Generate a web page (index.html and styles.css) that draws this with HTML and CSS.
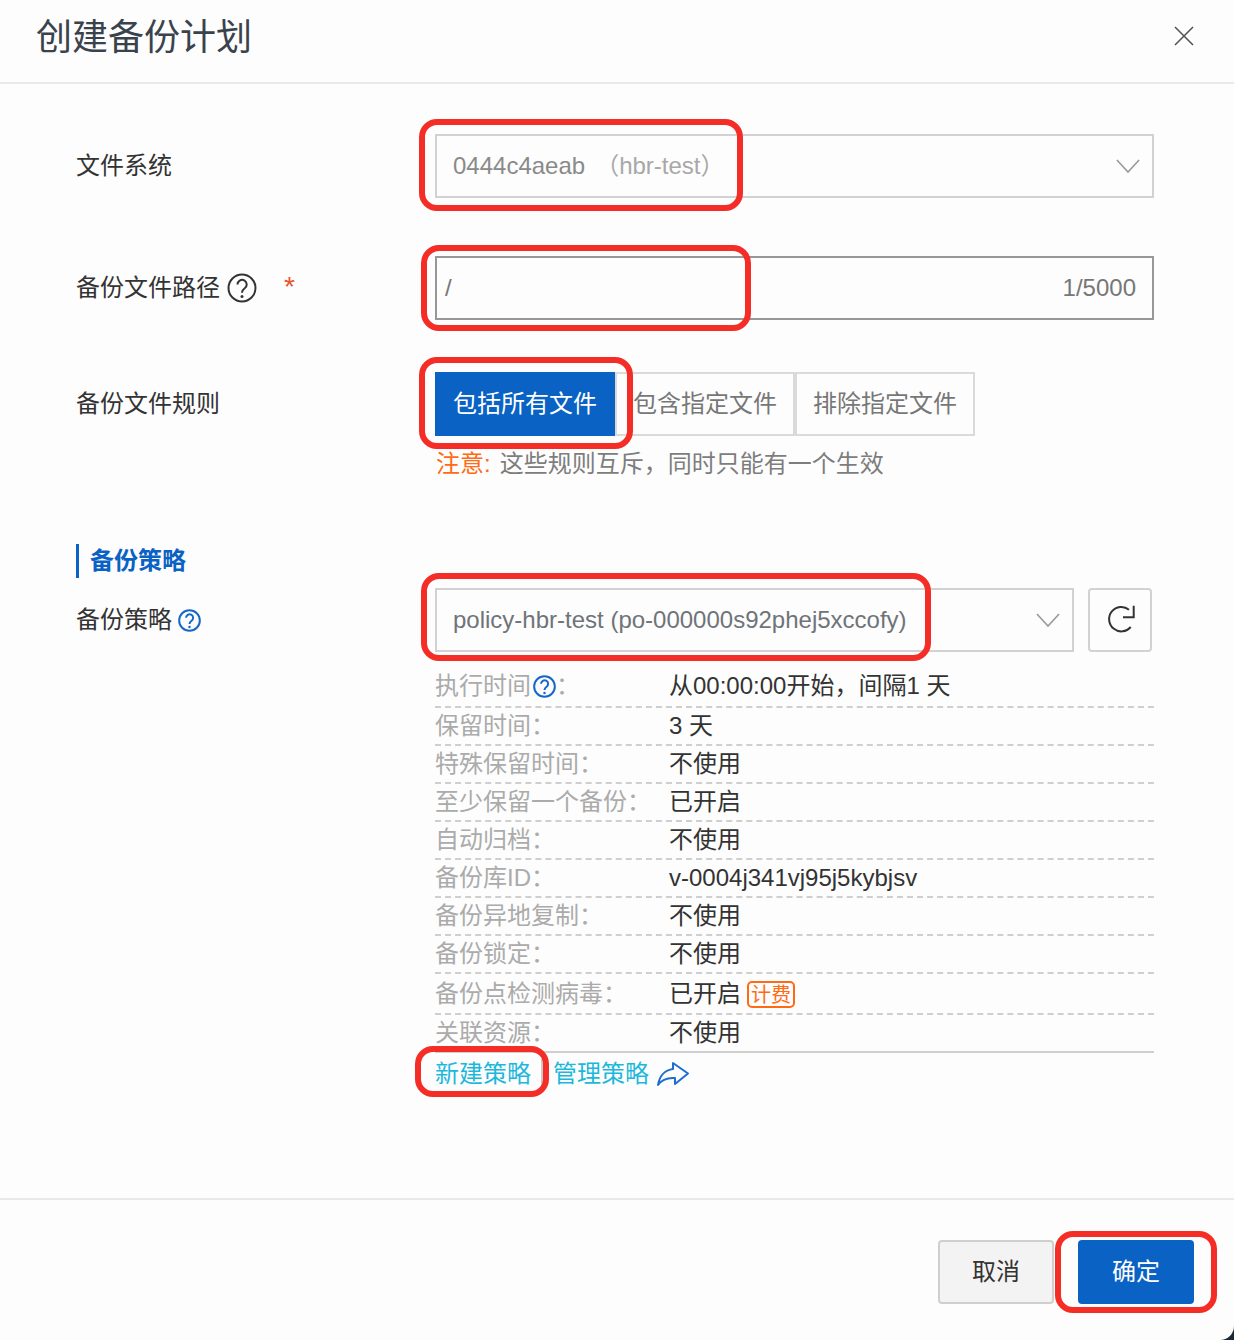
FILE: index.html
```html
<!DOCTYPE html>
<html lang="zh-CN">
<head>
<meta charset="utf-8">
<title>创建备份计划</title>
<link rel="stylesheet" href="styles.css">
</head>
<body>
<div class="modal">
  <header class="head">
    <h1 class="title">创建备份计划</h1>
    <svg class="close" viewBox="0 0 20 20"><path d="M1 1 19 19M19 1 1 19"/></svg>
  </header>

  <main class="content">
    <div class="row row-system">
      <label class="label">文件系统</label>
      <div class="field select">
        <span class="value">0444c4aeab<span class="paren">（hbr-test）</span></span>
        <svg class="chev" viewBox="0 0 26 16"><path d="M1 1 13 14 25 1"/></svg>
      </div>
    </div>

    <div class="row row-path">
      <label class="label">备份文件路径
        <svg class="help help-dark" viewBox="0 0 30 30"><circle cx="15" cy="15" r="13.5"/><path d="M10.5 11.5a4.6 4.6 0 1 1 7.2 3.8c-1.8 1.3-2.7 2.2-2.7 4.4"/><circle class="dot" cx="15" cy="23.5" r="1.5"/></svg>
        <span class="req">*</span>
      </label>
      <div class="field input">
        <span class="slash">/</span>
        <span class="count">1/5000</span>
      </div>
    </div>

    <div class="row row-rule">
      <label class="label">备份文件规则</label>
      <div class="group">
        <button class="seg seg-on">包括所有文件</button>
        <button class="seg">包含指定文件</button>
        <button class="seg">排除指定文件</button>
      </div>
    </div>
    <p class="note"><span class="note-key">注意:</span>这些规则互斥，同时只能有一个生效</p>

    <h2 class="section">备份策略</h2>

    <div class="row row-policy">
      <label class="label">备份策略
        <svg class="help help-blue" viewBox="0 0 30 30"><circle cx="15" cy="15" r="13.5"/><path d="M10.5 11.5a4.6 4.6 0 1 1 7.2 3.8c-1.8 1.3-2.7 2.2-2.7 4.4"/><circle class="dot" cx="15" cy="23.5" r="1.6"/></svg>
      </label>
      <div class="policy-col">
        <div class="policy-select">
          <div class="field select">
            <span class="value value-dark">policy-hbr-test (po-000000s92phej5xccofy)</span>
            <svg class="chev" viewBox="0 0 26 16"><path d="M1 1 13 14 25 1"/></svg>
          </div>
          <button class="refresh" aria-label="刷新">
            <svg viewBox="0 0 30 30"><path d="M25.7 22A12.2 12.2 0 1 1 24 4.7"/><path d="M28.7.7V12.3H18"/></svg>
          </button>
        </div>

        <dl class="info">
          <div class="info-row info-first"><dt>执行时间<svg class="help help-blue help-inline" viewBox="0 0 30 30"><circle cx="15" cy="15" r="13.5"/><path d="M10.5 11.5a4.6 4.6 0 1 1 7.2 3.8c-1.8 1.3-2.7 2.2-2.7 4.4"/><circle class="dot" cx="15" cy="23.5" r="1.6"/></svg>：</dt><dd>从00:00:00开始，间隔1 天</dd></div>
          <div class="info-row"><dt>保留时间：</dt><dd>3 天</dd></div>
          <div class="info-row"><dt>特殊保留时间：</dt><dd>不使用</dd></div>
          <div class="info-row"><dt>至少保留一个备份：</dt><dd>已开启</dd></div>
          <div class="info-row"><dt>自动归档：</dt><dd>不使用</dd></div>
          <div class="info-row"><dt>备份库ID：</dt><dd>v-0004j341vj95j5kybjsv</dd></div>
          <div class="info-row"><dt>备份异地复制：</dt><dd>不使用</dd></div>
          <div class="info-row"><dt>备份锁定：</dt><dd>不使用</dd></div>
          <div class="info-row info-tagged"><dt>备份点检测病毒：</dt><dd>已开启<span class="tag">计费</span></dd></div>
          <div class="info-row info-last"><dt>关联资源：</dt><dd>不使用</dd></div>
        </dl>

        <div class="links">
          <a class="link link-new">新建策略</a>
          <a class="link">管理策略</a>
          <svg class="share" viewBox="0 0 34 26"><path d="M32 12.5 17 2v6C9 9 3.500 15 2 24c4-6 10-7.500 17-7v6z"/></svg>
        </div>
      </div>
    </div>
  </main>

  <footer class="foot">
    <button class="btn btn-cancel">取消</button>
    <button class="btn btn-ok">确定</button>
  </footer>

  <i class="mark mark-1"></i>
  <i class="mark mark-2"></i>
  <i class="mark mark-3"></i>
  <i class="mark mark-4"></i>
  <i class="mark mark-5"></i>
  <i class="mark mark-6"></i>
</div>
</body>
</html>
```

FILE: styles.css
```css
* { box-sizing: border-box; }
html, body { margin: 0; padding: 0; background: #1b2a3a; }
body {
  width: 1234px;
  height: 1340px;
  overflow: hidden;
  font-family: "Liberation Sans", "Noto Sans CJK SC", sans-serif;
  font-size: 24px;
  line-height: 32px;
  color: #333;
}
button { font: inherit; cursor: pointer; }

.modal {
  position: relative;
  width: 1234px;
  height: 1340px;
  background: #fdfdfd;
  border-bottom-right-radius: 14px;
  display: flex;
  flex-direction: column;
  overflow: hidden;
}

/* header */
.head {
  height: 84px;
  flex: none;
  padding: 0 40px 0 36px;
  border-bottom: 2px solid #e9e9e9;
  display: flex;
  justify-content: space-between;
  align-items: flex-start;
}
.title {
  margin: 0;
  font-size: 36px;
  line-height: 76px;
  font-weight: 400;
  color: #3a434c;
}
.close {
  width: 20px;
  height: 20px;
  margin-top: 26px;
  fill: none;
  stroke: #555;
  stroke-width: 1.6;
}

/* form */
.content {
  flex: 1;
  padding: 50px 80px 0 77px;
}
.row {
  display: grid;
  grid-template-columns: 358px 719px;
}
.row-path { margin-top: 58px; }
.row-rule { margin-top: 52px; }
.label {
  display: flex;
  align-items: center;
  height: 64px;
  margin-left: -1px;
  white-space: nowrap;
  color: #333;
}

.field {
  height: 64px;
  border: 2px solid #d2d2d2;
  display: flex;
  align-items: center;
  justify-content: space-between;
}
.select { padding: 0 12px 0 16px; }
.value { color: #8a8a8a; white-space: nowrap; }
.value-dark { color: #6f7478; }
.paren { margin-left: 10px; color: #a8a8a8; }
.chev {
  width: 24px;
  height: 15px;
  fill: none;
  stroke: #9b9b9b;
  stroke-width: 1.8;
}
.input {
  border-color: #979797;
  padding: 0 16px 0 8px;
  color: #777;
}
.count { color: #777; }

.help {
  flex: none;
  fill: none;
  stroke-width: 2;
}
.help .dot { stroke: none; }
.help-dark {
  width: 30px;
  height: 30px;
  margin-left: 7px;
  stroke: #333;
}
.help-dark .dot { fill: #333; }
.help-blue {
  width: 23px;
  height: 23px;
  margin-left: 6px;
  stroke: #1668c8;
  stroke-width: 2.600;
}
.help-blue .dot { fill: #1668c8; }
.help-inline {
  margin-left: 2px;
  vertical-align: -4px;
}
.req {
  margin-left: 27px;
  margin-top: -2px;
  font-size: 28px;
  color: #e8532b;
}

/* segmented buttons */
.group { display: flex; }
.seg {
  width: 180px;
  height: 64px;
  padding: 0;
  background: #fdfdfd;
  border: 2px solid #dadada;
  color: #777;
}
.seg-on {
  background: #0a62c4;
  border-color: #0a62c4;
  color: #fff;
}
.note {
  margin: 12px 0 0 359px;
  line-height: 32px;
  color: #7d7d7d;
}
.note-key {
  margin-right: 9px;
  color: #ff6a13;
}

/* section */
.section {
  margin: 64px 0 10px -1px;
  height: 34px;
  padding-left: 11px;
  border-left: 3px solid #0a62c4;
  font-size: 24px;
  line-height: 34px;
  font-weight: 700;
  color: #0a62c4;
}

/* policy */
.policy-col { width: 719px; }
.policy-select { display: flex; }
.policy-select .field { width: 639px; }
.refresh {
  width: 64px;
  height: 64px;
  margin-left: 14px;
  padding: 0;
  background: #fdfdfd;
  border: 2px solid #d2d2d2;
  border-radius: 4px;
  display: flex;
  align-items: center;
  justify-content: center;
}
.refresh svg {
  width: 30px;
  height: 30px;
  fill: none;
  stroke: #333;
  stroke-width: 2;
}

.info { margin: 14px 0 0; }
.info-row {
  display: grid;
  grid-template-columns: 234px 1fr;
  align-items: center;
  height: 38px;
  border-bottom: 2px dashed #cfcfcf;
}
.info-first { height: 42px; }
.info-tagged { height: 41px; }
.info-last { border-bottom: 2px solid #cfcfcf; }
.info dt { color: #ababab; white-space: nowrap; }
.info dd { margin: 0; color: #333; white-space: nowrap; }
.tag {
  display: inline-block;
  margin-left: 6px;
  width: 48px;
  height: 27px;
  border: 2px solid #ff6a13;
  border-radius: 5px;
  font-size: 20px;
  line-height: 25px;
  text-align: center;
  color: #ff6a13;
  vertical-align: 0;
}

.links {
  display: flex;
  align-items: center;
  margin-top: 3px;
  height: 36px;
}
.link { color: #1cb8dc; white-space: nowrap; }
.link-new {
  padding-right: 10px;
  margin-right: 10px;
  border-right: 2px solid #c9c9c9;
  line-height: 30px;
}
.share {
  width: 34px;
  height: 26px;
  margin-left: 7px;
  fill: none;
  stroke: #1c6fd0;
  stroke-width: 2;
  stroke-linejoin: round;
}

/* footer */
.foot {
  flex: none;
  height: 142px;
  padding: 40px 40px 0 0;
  border-top: 2px solid #e9e9e9;
  display: flex;
  justify-content: flex-end;
  align-items: flex-start;
  gap: 24px;
}
.btn {
  width: 116px;
  height: 64px;
  padding: 0;
  border-radius: 4px;
}
.btn-cancel {
  background: #f3f3f3;
  border: 2px solid #cfcfcf;
  color: #333;
}
.btn-ok {
  background: #0a62c4;
  border: 2px solid #0a62c4;
  color: #fff;
}

/* red annotations drawn on top of the screenshot */
.mark {
  position: absolute;
  border: 6px solid #f52d27;
  border-radius: 18px;
  pointer-events: none;
}
.mark-1 { left: 419px; top: 119px; width: 324px; height: 92px; }
.mark-2 { left: 421px; top: 245px; width: 330px; height: 86px; }
.mark-3 { left: 419px; top: 357px; width: 214px; height: 92px; }
.mark-4 { left: 421px; top: 573px; width: 510px; height: 88px; }
.mark-5 { left: 415px; top: 1046px; width: 134px; height: 51px; }
.mark-6 { left: 1055px; top: 1231px; width: 162px; height: 82px; }
```
